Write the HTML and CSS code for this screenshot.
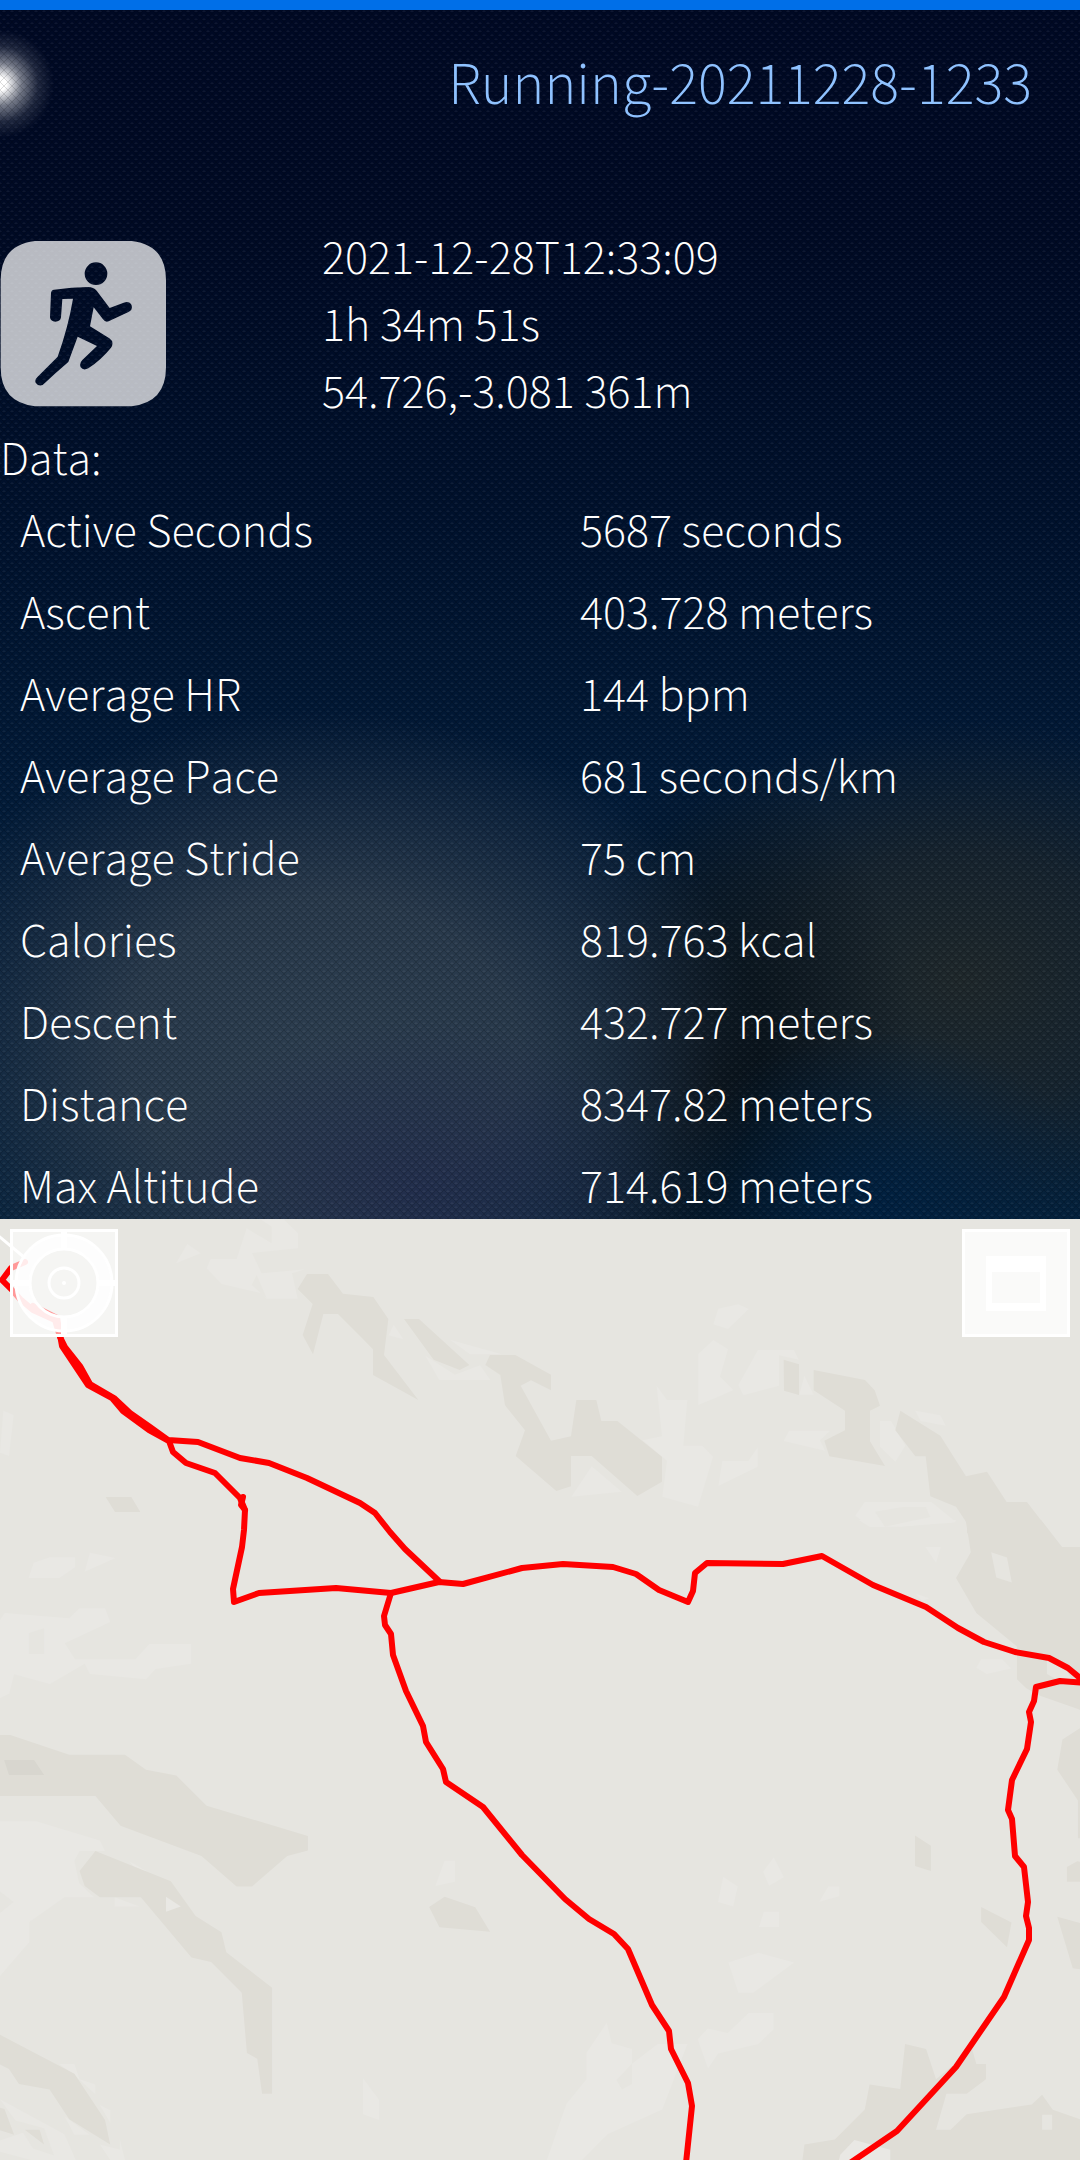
FILE: index.html
```
<!DOCTYPE html>
<html lang="en">
<head>
<meta charset="utf-8">
<meta name="viewport" content="width=device-width, initial-scale=1">
<title>Running-20211228-1233</title>
<link rel="stylesheet" href="styles.css">
</head>
<body>
<main class="page">
  <section class="details">
    <header class="page-header">
      <h1 class="title">Running-20211228-1233</h1>
    </header>
    <div class="summary">
      <svg class="sport-icon" viewBox="0 33 498 498" role="img" aria-label="Running">
        <path fill-rule="evenodd" d="M105 33H395Q498 45 498 150V412Q498 517 395 529H105Q2 517 2 412V150Q2 45 105 33Z
          M288 97A34 34 0 0 0 288 165A34 34 0 0 0 288 97Z
          M162 179Q215 172 265 171Q280 171 290 182L329 234L371 218Q386 213 393 222Q401 238 387 245L326 274Q316 278 309 268L281 232L270 289L328 325Q344 336 333 353Q305 388 265 415Q250 423 242 412Q237 400 247 390L291 348L233 320L205 396Q165 430 128 465Q115 470 107 458Q103 449 113 440L173 380Q205 290 219 206L187 207L183 262Q181 275 166 275Q151 274 150 262L153 189Q154 180 162 179Z"/>
      </svg>
      <div class="facts">
        <p>2021-12-28T12:33:09</p>
        <p>1h 34m 51s</p>
        <p>54.726,-3.081 361m</p>
      </div>
    </div>
    <h2 class="section-title">Data:</h2>
    <table class="data">
      <tbody>
        <tr><th scope="row">Active Seconds</th><td>5687 seconds</td></tr>
        <tr><th scope="row">Ascent</th><td>403.728 meters</td></tr>
        <tr><th scope="row">Average HR</th><td>144 bpm</td></tr>
        <tr><th scope="row">Average Pace</th><td>681 seconds/km</td></tr>
        <tr><th scope="row">Average Stride</th><td>75 cm</td></tr>
        <tr><th scope="row">Calories</th><td>819.763 kcal</td></tr>
        <tr><th scope="row">Descent</th><td>432.727 meters</td></tr>
        <tr><th scope="row">Distance</th><td>8347.82 meters</td></tr>
        <tr><th scope="row">Max Altitude</th><td>714.619 meters</td></tr>
      </tbody>
    </table>
  </section>
  <section class="map" aria-label="Map">
    <svg class="map-canvas" viewBox="0 0 1080 941" preserveAspectRatio="xMidYMid slice" aria-hidden="true">
      <!-- hill shading, north west -->
      <g transform="translate(0 -9) scale(.33333)">
        <path class="light" d="M528 160L562 102L602 130ZM620 175L632 147H710L740 55L815 100V50L780 27H850L894 70V115L756 129L785 190L915 178L876 190L893 266H800L785 250L665 222ZM10 602L41 615L27 738L0 728Z"/>
        <path class="base" d="M770 195L800 265L755 225Z"/>
        <path class="dark" d="M893 237L921 192H984L1029 251L1120 261L1165 327L1152 435L1255 570L1119 495V418L1080 378L1014 312H970L939 433L908 375L938 282ZM317 861H394L421 906H345Z"/>
      </g>
      <!-- hill shading, north -->
      <g transform="translate(360 -9) scale(.33333)">
        <path class="dark" d="M132 327H177L328 465L299 480L221 449ZM376 465L390 435H466L573 494V541L513 511L482 527L573 692L633 679L649 570H709L724 633H772L906 740V815L832 858L695 738H633V829L589 843L467 738L495 661L435 586L421 495Z"/>
        <path class="light" d="M86 376L101 344L130 388ZM270 389L425 433H330ZM196 437L285 494L360 466L391 510H238ZM634 860L695 769L785 845ZM890 527L921 570H982L970 707H1027L1059 740L1014 890L907 860L921 752L848 691L906 679ZM1060 343L1075 296L1135 283L1166 297L1104 357ZM1015 432L1060 390L1104 418L1080 500L1120 540L1080 558L1015 585ZM1075 828L1087 753H1165L1193 712V770Z"/>
      </g>
      <!-- hill shading, north east -->
      <g transform="translate(720 -9) scale(.33333)">
        <path class="light" d="M55 525L114 420H222L236 449L177 436V527L70 556ZM238 554L253 497L281 554ZM191 693L207 662H330L300 691L315 722ZM480 633H513L556 707L526 755L480 710ZM586 602L661 616L677 647L602 633ZM406 917L434 876H634L707 935L530 950H450Z"/>
        <path class="base" d="M465 905L548 891H617L631 921L495 950Z"/>
        <path class="dark" d="M191 449L237 463V555L192 542ZM281 480L435 510L464 541L480 587L450 602V694L495 768L328 739L313 692L375 661V602L281 541ZM541 602L661 677L738 799L801 785L860 876H921L990 966L741 970V940L708 890L631 859L617 739H586L526 661Z"/>
      </g>
      <!-- hill shading, south west -->
      <g transform="translate(0 301) scale(.34439 .40816)">
        <path class="light" d="M83 142L98 105L145 91H218V116L172 142ZM246 127L261 80L335 93ZM0 245L14 228L201 241L231 216H305L320 250L188 302L218 341H393L434 304H555V352L452 365L424 390L261 377L246 352L145 402L41 378L27 425L0 437ZM0 738H105L290 785L305 811H231L216 835L230 890L273 924H187L85 985V1034L0 1117ZM375 836L425 860H400ZM333 924L405 947H333ZM1264 897L1291 835H1321V886ZM1054 1368L1101 1421V1470L1054 1456ZM172 1333H216L231 1370L277 1383V1407L216 1360ZM0 1419L187 1505L220 1568H90L0 1548V1520L70 1500ZM187 1460L260 1506H216ZM290 1433L320 1446V1477ZM290 1530L348 1542V1518L363 1568H320Z"/>
        <path class="base" d="M84 277L128 265V328H84ZM0 910L39 936L0 963ZM40 1470L128 1490L157 1557L96 1540L70 1505Z"/>
        <path class="dark" d="M0 527H30L201 575H363L424 612L512 626L600 700L894 774V810L834 823L732 898H687L585 823L350 749L277 676H0ZM277 811L496 885L568 970L643 1010L657 1059L790 1146V1406H761L747 1320L717 1306L702 1158L613 1083L556 1072L409 924H290L246 897L231 860ZM0 1261L216 1357L305 1470L320 1530L201 1468L144 1395L55 1382L26 1345L0 1334ZM0 1440L13 1443L41 1506L0 1495ZM72 1494H115L128 1530ZM1246 948L1291 923L1380 949L1423 1009L1276 998Z"/>
        <path class="darker" d="M12 588H99L128 625H26Z"/>
        <path class="light" d="M482 923L525 947L482 960Z"/>
      </g>
      <!-- hill shading, south east -->
      <g transform="translate(540 301) scale(.34439 .40816)">
        <path class="dark" d="M1236 0H1455L1516 66H1600V480L1562 463L1450 430L1412 412L1385 390V310L1267 228L1208 142L1251 79ZM1562 513L1600 495V780H1562V687L1502 612L1517 538ZM1089 773L1135 798V860L1089 848ZM1281 948L1369 986L1356 1047L1281 985ZM1530 850L1560 836L1580 840V886H1530ZM1502 972L1580 990V1102L1547 1098ZM762 1568L768 1530L856 1518L943 1444L957 1383L1046 1394L1060 1284L1121 1296L1150 1370L1255 1297L1267 1333H1295V1370L1239 1406H1180L1150 1494H1192L1239 1456L1428 1432L1458 1408L1489 1445L1580 1472V1568Z"/>
        <path class="base" d="M1310 79L1356 92L1370 153L1325 141ZM1472 340L1510 345L1545 390L1510 395L1472 377ZM1458 1457H1487V1494H1458Z"/>
        <path class="light" d="M925 0H988L1000 17H958ZM1035 17L1120 0H1208L1204 6ZM1119 66H1164L1150 105ZM1090 180L1130 192L1110 198ZM1267 362L1281 341H1342L1368 364L1297 377ZM648 862L679 826L708 875L665 896ZM517 936L532 874L574 898L561 947ZM811 935L837 898H869V922ZM636 997L650 960H694V997ZM547 1084L634 1060L738 1084L619 1158H576ZM458 1272L487 1246L545 1257L606 1208H678V1248L634 1284L517 1307L488 1344ZM20 1568L77 1430L135 1370V1305L194 1232L208 1282L267 1296V1332L342 1284H428L355 1444L196 1505L122 1568ZM868 1568L872 1555L913 1519L1017 1543V1568Z"/>
        <path class="base" d="M222 1372L267 1332V1382L238 1395Z"/>
      </g>
      <path class="road" d="M-5 14L25 39"/>
      <g class="track">
        <path d="M25 43L11 49L2 61L13 72L20 80L33 91L55 101L60 118L65 128L80 147L90 165L114 179L130 194L150 208L168 221L198 223L240 239L269 244L307 259L360 284L375 294L390 313L405 330L439 362"/>
        <path d="M33 87L57 99L62 127L88 166L112 179L123 192L149 211L169 222L173 233L186 244L215 254L240 279L245 291L244 311L242 328L233 370L234 383L259 374L336 369L391 374L439 363L463 365L522 349L563 345L613 348L636 355L659 371L688 383L693 372L695 354L707 344L783 345L822 337L873 366L926 388L958 409L984 423L1015 433L1049 439L1068 449L1086 464L1060 462L1036 468L1034 482L1029 493L1031 503L1027 530L1012 561L1008 591L1012 600L1015 637L1024 648L1028 683L1026 697L1029 709L1029 721L1004 778L956 848L897 912L850 944"/>
        <path d="M391 374L384 397L385 406L391 415L393 436L406 472L423 507L426 523L443 550L446 563L483 588L522 636L565 680L589 700L614 715L628 730L652 786L669 812L671 830L688 864L692 887L686 944"/>
        <path d="M243 278L241 286L245 291"/>
      </g>
    </svg>
    <button class="map-button" type="button" aria-label="Centre on position">
      <svg viewBox="0 0 108 108" aria-hidden="true">
        <circle class="ring" cx="54" cy="54" r="41"/>
        <g class="lines">
          <circle cx="54" cy="54" r="48"/>
          <circle cx="54" cy="54" r="34"/>
          <circle cx="54" cy="54" r="15"/>
        </g>
        <path class="ticks" d="M54 3V20M54 88V105M3 54H20M88 54H105"/>
        <circle class="dot" cx="54" cy="54" r="2"/>
      </svg>
    </button>
    <button class="map-button map-button-solid" type="button" aria-label="Maximise map">
      <svg viewBox="0 0 108 108" aria-hidden="true">
        <path class="dot" fill-rule="evenodd" d="M24 27H84V82H24ZM30 43V74H78V43Z"/>
      </svg>
    </button>
  </section>
</main>
</body>
</html>
```
FILE: styles.css
```
* { box-sizing: border-box; }

body {
  margin: 0;
  color: #fff;
  background: #000a20;
  font-family: "Source Sans Pro", "Source Sans 3", "Noto Sans CJK SC", sans-serif;
  font-weight: 300;
  font-size: 48px;
  line-height: 67px;
  font-kerning: none;
}

h1, h2, p { margin: 0; font-weight: 300; font-size: inherit; }

.page {
  display: grid;
  grid-template-rows: 1219fr 941fr;
  height: 100vh;
}

.details {
  min-height: 0;
  overflow-y: auto;
  scrollbar-width: none;
  border-top: 10px solid #006fe8;
  background:
    url("data:image/svg+xml,%3Csvg xmlns='http://www.w3.org/2000/svg' width='8' height='8'%3E%3Cpath d='M0 0L8 8M8 0L0 8' stroke='%23000' stroke-opacity='.14'/%3E%3Cpath d='M4 0L6 2H2ZM0 4L2 6H0ZM8 4V6H6Z' fill='%23fff' fill-opacity='.06'/%3E%3C/svg%3E"),
    radial-gradient(circle 54px at 0 74px, #fff 0, #fff 12%, rgba(255, 255, 255, .45) 40%, rgba(255, 255, 255, .12) 70%, transparent 100%),
    radial-gradient(260px 170px at 420px 1180px, rgba(30, 38, 76, .6), transparent),
    radial-gradient(440px 340px at 320px 1040px, rgba(48, 64, 80, .9), rgba(47, 62, 78, .85) 45%, rgba(42, 56, 74, .45) 75%, transparent),
    radial-gradient(220px 180px at 880px 1200px, rgba(0, 32, 64, .95), transparent),
    radial-gradient(200px 330px at 720px 1080px, rgba(6, 14, 20, .95), transparent),
    radial-gradient(360px 260px at 960px 970px, rgba(32, 40, 42, .95), rgba(30, 38, 42, .7) 50%, transparent),
    linear-gradient(#000924, #000a24 220px, #00112c 500px, #021b38 800px, #02203c);
}

.page-header { padding: 36px 48px 100px; }

.title {
  color: #8fc2ff;
  font-size: 60px;
  line-height: 80px;
  text-align: right;
}

.summary {
  display: grid;
  grid-template-columns: 322px 1fr;
}

.sport-icon {
  width: 166px;
  height: 166px;
  margin-top: 15px;
  fill: rgba(255, 255, 255, .72);
}

.data {
  width: 100%;
  border-collapse: collapse;
  table-layout: fixed;
}

.data th, .data td {
  padding: 6px 0 12px 20px;
  line-height: 64px;
  text-align: left;
  font-weight: 300;
}

.data th { width: 560px; }

.data tr:last-child th, .data tr:last-child td { padding-bottom: 0; }

.map {
  position: relative;
  min-height: 0;
  display: flex;
  justify-content: space-between;
  align-items: flex-start;
  padding: 10px;
  overflow: hidden;
  background: #e6e5e0;
}

.map-canvas {
  position: absolute;
  inset: 0;
  width: 100%;
  height: 100%;
}

.base { fill: #e6e5e0; }
.light { fill: #e9e8e4; }
.dark { fill: #dfddd6; }
.darker { fill: #d8d6cf; }

.road { fill: none; stroke: #fff; stroke-width: 3; }

.track {
  fill: none;
  stroke: #f00;
  stroke-width: 6;
  stroke-linejoin: round;
  stroke-linecap: round;
}

.map-button {
  position: relative;
  width: 108px;
  height: 108px;
  padding: 0;
  border: 0;
  box-shadow: inset 0 0 0 3px #fff;
  background: rgba(255, 255, 255, .6);
}

.map-button-solid { background: rgba(255, 255, 255, .8); }

.map-button svg { display: block; width: 100%; height: 100%; }

.ring { fill: none; stroke: rgba(255, 255, 255, .8); stroke-width: 14; }
.lines { fill: none; stroke: #fff; stroke-width: 3; }
.ticks { stroke: #fff; stroke-width: 6; }
.dot { fill: #fff; }
```
